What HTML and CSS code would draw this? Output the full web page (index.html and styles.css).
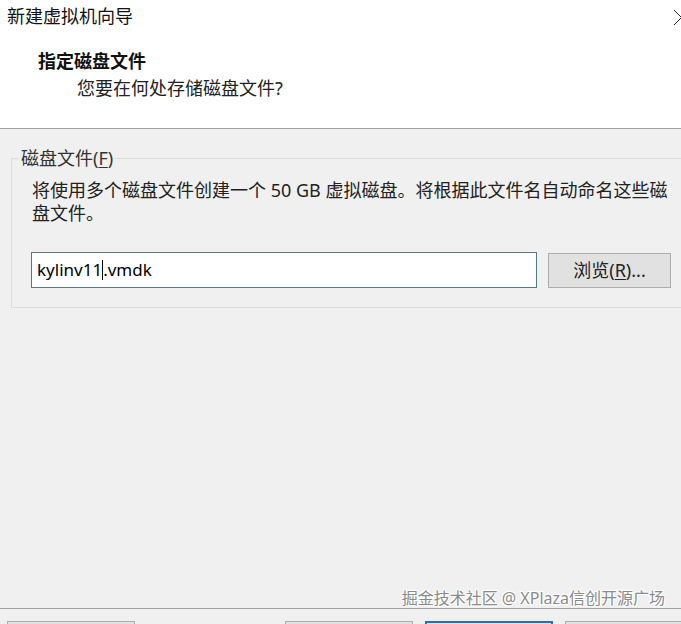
FILE: index.html
```html
<!DOCTYPE html>
<html lang="zh-CN">
<head>
<meta charset="utf-8">
<title>新建虚拟机向导</title>
<link rel="stylesheet" href="styles.css">
</head>
<body>
<div class="window">
  <header class="header">
    <div class="title">新建虚拟机向导</div>
    <svg class="chevron" width="10" height="17" viewBox="0 0 10 17"><polyline points="1,1 8.5,8.5 1,16" fill="none" stroke="#222" stroke-width="1"/></svg>
    <div class="heading">指定磁盘文件</div>
    <div class="subheading">您要在何处存储磁盘文件?</div>
  </header>
  <main class="main">
    <fieldset class="group">
      <legend class="group-label">磁盘文件(<u>F</u>)</legend>
      <p class="desc">将使用多个磁盘文件创建一个 50 GB 虚拟磁盘。将根据此文件名自动命名这些磁盘文件。</p>
      <div class="file-row">
        <div class="input">kylinv11<span class="caret"></span>.vmdk</div>
        <div class="btn browse">浏览(<u>R</u>)...</div>
      </div>
    </fieldset>
    <div class="watermark">掘金技术社区 @ XPlaza信创开源广场</div>
  </main>
  <footer class="footer">
    <div class="btn fbtn b1"></div>
    <div class="btn fbtn b2"></div>
    <div class="btn fbtn primary"></div>
    <div class="btn fbtn b4"></div>
  </footer>
</div>
</body>
</html>
```
FILE: styles.css
```css
* { box-sizing: border-box; }
html, body { margin: 0; padding: 0; }
body {
  width: 681px;
  height: 624px;
  overflow: hidden;
  background: #f0f0f0;
  font-family: "Noto Sans", "Noto Sans CJK SC", sans-serif;
  color: #000;
}
.window {
  display: flex;
  flex-direction: column;
  height: 624px;
}
.header {
  position: relative;
  background: #fff;
  height: 129px;
  border-bottom: 1px solid #a0a0a0;
  padding: 4px 0 0 7px;
}
.title {
  font-size: 18px;
  line-height: 24px;
  color: #111;
}
.chevron {
  position: absolute;
  top: 9px;
  right: -2px;
}
.heading {
  margin: 21px 0 0 31px;
  font-size: 18px;
  line-height: 24px;
  font-weight: 700;
  color: #111;
}
.subheading {
  margin: 3px 0 0 70px;
  font-size: 18px;
  line-height: 24px;
  color: #222;
}
.main {
  position: relative;
  flex: 1;
}
.group {
  margin: 18px -20px 0 11px;
  padding: 0 0 0 0;
  border: 1px solid #dcdcdc;
  min-width: 0;
}
.group-label {
  margin-left: 7px;
  padding: 0 2px;
  font-size: 18px;
  line-height: 22px;
  color: #333;
}
.group-label u { text-decoration-thickness: 1px; text-underline-offset: 2px; }
.desc {
  margin: 10px 0 0 0;
  padding: 0 30px 0 20px;
  font-size: 18px;
  line-height: 23px;
  color: #222;
}
.file-row {
  display: flex;
  align-items: center;
  gap: 11px;
  padding: 27px 0 19px 19px;
}
.input {
  width: 506px;
  height: 36px;
  background: #fff;
  border: 1px solid #56798a;
  padding: 0 0 0 5px;
  font-size: 17px;
  line-height: 33px;
  color: #000;
}
.caret {
  display: inline-block;
  width: 1px;
  height: 20px;
  background: #000;
  vertical-align: -4px;
}
.btn {
  background: #e1e1e1;
  border: 1px solid #adadad;
}
.browse {
  width: 123px;
  height: 35px;
  text-align: center;
  font-size: 18px;
  line-height: 32px;
  color: #222;
}
.browse u { text-decoration-thickness: 1px; text-underline-offset: 2px; }
.watermark {
  position: absolute;
  right: 16px;
  bottom: 0px;
  font-size: 16px;
  line-height: 20px;
  color: #8a8a8a;
  text-shadow: 1px 1px 0 #fff, -1px -1px 0 #fff, 1px -1px 0 #fff, -1px 1px 0 #fff;
}
.footer {
  height: 16px;
  border-top: 1px solid #a0a0a0;
  display: flex;
  padding: 12px 0 0 7px;
  overflow: hidden;
}
.fbtn {
  width: 128px;
  height: 30px;
  flex: none;
}
.b2 { margin-left: 150px; }
.primary { margin-left: 12px; border: 2px solid #2a6fb0; }
.b4 { margin-left: 12px; }
```
